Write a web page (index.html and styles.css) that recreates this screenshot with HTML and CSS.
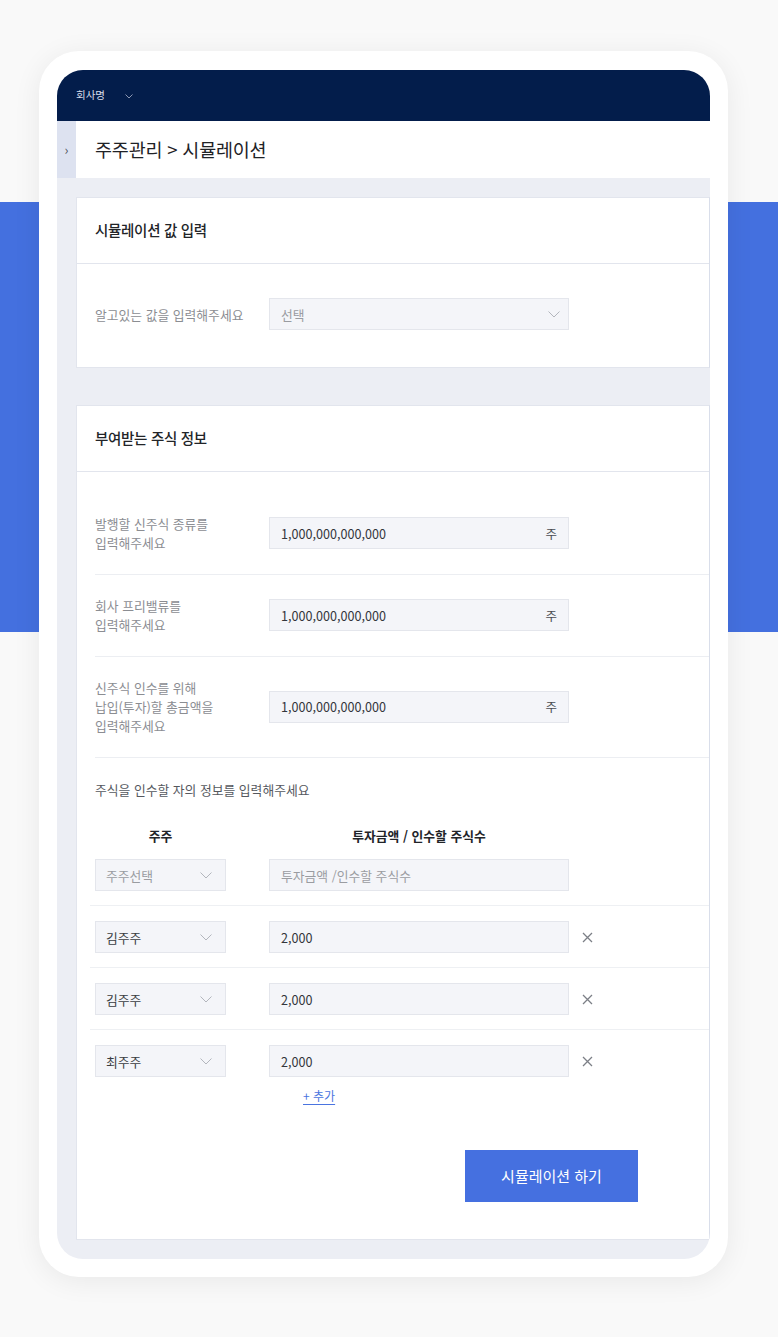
FILE: index.html
```html
<!DOCTYPE html>
<html lang="ko">
<head>
<meta charset="utf-8">
<title>주주관리 - 시뮬레이션</title>
<link rel="stylesheet" href="styles.css">
</head>
<body>
<div class="frame">
  <div class="screen">
    <header class="topbar">
      <span class="company">회사명</span>
      <svg class="topchev" width="8" height="5" viewBox="0 0 8 5"><polyline points="0.5,0.5 4,4 7.5,0.5" fill="none" stroke="#8c97b3" stroke-width="1"/></svg>
    </header>
    <div class="crumbbar">
      <div class="sidetoggle">›</div>
      <div class="crumb">주주관리 &gt; 시뮬레이션</div>
    </div>
    <main class="content">
      <section class="card">
        <div class="card-head">시뮬레이션 값 입력</div>
        <div class="card-body first">
          <div class="label">알고있는 값을 입력해주세요</div>
          <div class="field select">
            <span class="ph">선택</span>
            <svg class="chev" width="12" height="7" viewBox="0 0 12 7"><polyline points="0.5,0.5 6,6 11.5,0.5" fill="none" stroke="#b3b6bd" stroke-width="1"/></svg>
          </div>
        </div>
      </section>

      <section class="card card2">
        <div class="card-head">부여받는 주식 정보</div>
        <div class="card-body">
          <div class="row">
            <div class="label">발행할 신주식 종류를<br>입력해주세요</div>
            <div class="field"><span class="val">1,000,000,000,000</span><span class="unit">주</span></div>
          </div>
          <div class="row">
            <div class="label">회사 프리밸류를<br>입력해주세요</div>
            <div class="field"><span class="val">1,000,000,000,000</span><span class="unit">주</span></div>
          </div>
          <div class="row">
            <div class="label">신주식 인수를 위해<br>납입(투자)할 총금액을<br>입력해주세요</div>
            <div class="field"><span class="val">1,000,000,000,000</span><span class="unit">주</span></div>
          </div>

          <div class="holders">
            <div class="holders-title">주식을 인수할 자의 정보를 입력해주세요</div>
            <div class="hrow heads">
              <div class="hcol-a">주주</div>
              <div class="hcol-b">투자금액 / 인수할 주식수</div>
            </div>
            <div class="hrow line">
              <div class="field small select"><span class="ph">주주선택</span><svg class="chev" width="12" height="7" viewBox="0 0 12 7"><polyline points="0.5,0.5 6,6 11.5,0.5" fill="none" stroke="#b3b6bd" stroke-width="1"/></svg></div>
              <div class="field wide"><span class="ph">투자금액 /인수할 주식수</span></div>
            </div>
            <div class="hrow line">
              <div class="field small select"><span class="sv">김주주</span><svg class="chev" width="12" height="7" viewBox="0 0 12 7"><polyline points="0.5,0.5 6,6 11.5,0.5" fill="none" stroke="#b3b6bd" stroke-width="1"/></svg></div>
              <div class="field wide"><span class="val">2,000</span></div>
              <svg class="remove" width="11" height="11" viewBox="0 0 11 11"><path d="M1 1L10 10M10 1L1 10" stroke="#7c7f86" stroke-width="1.3" fill="none"/></svg>
            </div>
            <div class="hrow line">
              <div class="field small select"><span class="sv">김주주</span><svg class="chev" width="12" height="7" viewBox="0 0 12 7"><polyline points="0.5,0.5 6,6 11.5,0.5" fill="none" stroke="#b3b6bd" stroke-width="1"/></svg></div>
              <div class="field wide"><span class="val">2,000</span></div>
              <svg class="remove" width="11" height="11" viewBox="0 0 11 11"><path d="M1 1L10 10M10 1L1 10" stroke="#7c7f86" stroke-width="1.3" fill="none"/></svg>
            </div>
            <div class="hrow last">
              <div class="field small select"><span class="sv">최주주</span><svg class="chev" width="12" height="7" viewBox="0 0 12 7"><polyline points="0.5,0.5 6,6 11.5,0.5" fill="none" stroke="#b3b6bd" stroke-width="1"/></svg></div>
              <div class="field wide"><span class="val">2,000</span></div>
              <svg class="remove" width="11" height="11" viewBox="0 0 11 11"><path d="M1 1L10 10M10 1L1 10" stroke="#7c7f86" stroke-width="1.3" fill="none"/></svg>
            </div>
            <a class="add" href="#">+ 추가</a>
          </div>

          <div class="actions">
            <button class="btn" type="button">시뮬레이션 하기</button>
          </div>
        </div>
      </section>
    </main>
  </div>
</div>
</body>
</html>
```

FILE: styles.css
```css
html, body {
  margin: 0;
  padding: 0;
}
body {
  width: 778px;
  min-height: 1337px;
  font-family: "Noto Sans CJK KR", "Noto Sans", sans-serif;
  background: linear-gradient(to bottom, #f9f9f9 0, #f9f9f9 202px, #4470df 202px, #4470df 632px, #f9f9f9 632px, #f9f9f9 100%);
  overflow: hidden;
}
.frame {
  margin: 51px 0 0 39px;
  width: 689px;
  box-sizing: border-box;
  padding: 19px 18px 18px 18px;
  background: #ffffff;
  border-radius: 40px;
  box-shadow: 0 4px 28px rgba(0, 0, 0, 0.07);
}
.screen {
  background: #eceef4;
  border-radius: 26px;
  overflow: hidden;
}
.topbar {
  height: 51px;
  background: #031d4b;
  display: flex;
  align-items: center;
  padding-left: 19px;
  gap: 20px;
}
.company {
  color: #d9deea;
  font-size: 10.5px;
  line-height: 1;
}
.topchev {
  display: block;
  margin-top: 1px;
}
.crumbbar {
  height: 57px;
  display: flex;
  background: #ffffff;
}
.sidetoggle {
  width: 19px;
  background: #dde2f0;
  color: #55585f;
  font-size: 13px;
  display: flex;
  align-items: center;
  justify-content: center;
  padding-bottom: 1px;
}
.crumb {
  flex: 1;
  display: flex;
  align-items: center;
  padding-left: 19px;
  padding-bottom: 2px;
  font-size: 18.5px;
  color: #1f2226;
  letter-spacing: -0.2px;
}
.content {
  padding: 19px 0 19px 19px;
}
.card {
  background: #ffffff;
  border: 1px solid #e2e5ed;
  border-right-color: #d9deea;
}
.card2 {
  margin-top: 37px;
}
.card-head {
  height: 66px;
  box-sizing: border-box;
  border-bottom: 1px solid #e2e5ed;
  display: flex;
  align-items: center;
  padding: 0 0 3px 18px;
  font-size: 14.5px;
  font-weight: 500;
  color: #222428;
  letter-spacing: -0.3px;
}
.card-body {
  padding: 20px 0 37px 18px;
}
.card-body.first {
  height: 103px;
  box-sizing: border-box;
  padding: 0 0 3px 18px;
  display: flex;
  align-items: center;
}
.label {
  width: 174px;
  flex: none;
  font-size: 12.8px;
  line-height: 19px;
  color: #8b8d92;
}
.row {
  display: flex;
  align-items: center;
  padding: 22px 0;
  border-bottom: 1px solid #eceef2;
}
.row + .row {
  padding-top: 21px;
}
.field {
  width: 300px;
  height: 32px;
  box-sizing: border-box;
  background: #f4f5f9;
  border: 1px solid #e4e6ec;
  display: flex;
  align-items: center;
  justify-content: space-between;
  padding: 0 11px 0 11px;
  flex: none;
}
.val {
  font-size: 12.6px;
  color: #33363b;
}
.unit {
  font-size: 12.5px;
  color: #4a4d52;
}
.ph {
  font-size: 12.8px;
  color: #9a9ca1;
}
.sv {
  font-size: 12.8px;
  color: #3a3d42;
}
.chev {
  display: block;
  flex: none;
}
.select {
  padding-right: 8px;
}
.holders {
  padding-top: 22px;
}
.holders-title {
  font-size: 12.8px;
  line-height: 19px;
  color: #55585e;
}
.hrow {
  display: flex;
  align-items: center;
  gap: 43px;
  padding: 15px 0 14px 0;
}
.hrow.line {
  border-bottom: 1px solid #eef0f3;
  margin-left: -5px;
  padding-left: 5px;
}
.hrow.last {
  padding-bottom: 0;
}
.hrow.heads {
  margin-top: 27px;
  padding: 0 0 14px 0;
  font-size: 12.8px;
  font-weight: 700;
  line-height: 19px;
  color: #222428;
}
.hrow.heads + .hrow.line {
  padding-top: 0;
}
.hcol-a {
  width: 131px;
  text-align: center;
}
.hcol-b {
  width: 300px;
  text-align: center;
}
.field.small {
  width: 131px;
  padding-left: 10px;
  padding-right: 13px;
}
.remove {
  display: block;
  margin-left: -30px;
  flex: none;
}
.add {
  display: block;
  width: fit-content;
  margin: 9px 0 0 208px;
  font-size: 12px;
  line-height: 19px;
  color: #4a74e0;
  text-decoration: underline;
  text-underline-offset: 3px;
}
.actions {
  padding: 45px 0 0 370px;
}
.btn {
  display: block;
  width: 173px;
  height: 52px;
  border: none;
  background: #4570e0;
  color: #ffffff;
  font-family: "Noto Sans CJK KR", "Noto Sans", sans-serif;
  font-size: 15px;
  cursor: pointer;
  padding: 0 0 2px 0;
}
```
